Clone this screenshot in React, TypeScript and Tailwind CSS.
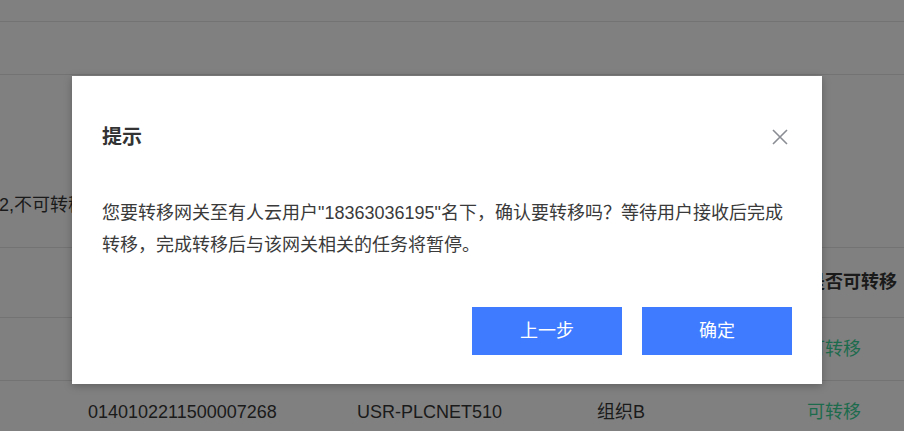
import React from "react";

const font = { fontFamily: '"Liberation Sans", "Noto Sans CJK SC", sans-serif' };

export default function App() {
  return (
    <div
      className="relative w-[904px] h-[431px] overflow-hidden bg-[#808080] text-[#1a1a1a]"
      style={font}
    >
      {/* background page (already dimmed by mask) */}
      <div className="flex flex-col">
        <div className="h-[22px] border-b border-[#737373]" />
        <div className="h-[53px] border-b border-[#737373]" />
        <div className="h-[172px] flex flex-col">
          <div className="mt-[116px] -ml-[1px] text-[18px] leading-[28px] whitespace-nowrap">2,不可转移</div>
        </div>
        <div className="grid grid-cols-[88px_269px_240px_210px_1fr] h-[71px] border-y border-[#737373] items-center text-[18px] font-bold">
          <div />
          <div />
          <div />
          <div />
          <div className="whitespace-nowrap">是否可转移</div>
        </div>
        <div className="grid grid-cols-[88px_269px_240px_210px_1fr] h-[63px] border-b border-[#737373] items-center text-[18px]">
          <div />
          <div />
          <div />
          <div />
          <div className="text-[#1d6b4d]">可转移</div>
        </div>
        <div className="grid grid-cols-[88px_269px_240px_210px_1fr] h-[63px] items-center text-[18px]">
          <div />
          <div>0140102211500007268</div>
          <div>USR-PLCNET510</div>
          <div>组织B</div>
          <div className="text-[#1d6b4d]">可转移</div>
        </div>
      </div>

      {/* modal */}
      <div className="absolute left-[72px] top-[76px] w-[750px] h-[308px] bg-white shadow-[0_2px_8px_rgba(0,0,0,0.25)] flex flex-col px-[30px]">
        <div className="flex items-center justify-between pt-[47px]">
          <div className="text-[20px] leading-[28px] font-bold text-[#333]">提示</div>
          <svg width="16" height="16" viewBox="0 0 16 16" className="mr-[4px]">
            <path d="M1 1L15 15M15 1L1 15" stroke="#8a8d94" strokeWidth="1.6" fill="none" />
          </svg>
        </div>
        <div className="mt-[46px] text-[18px] leading-[32px] text-[#3a3a3a]">
          您要转移网关至有人云用户"18363036195"名下，确认要转移吗？等待用户接收后完成转移，完成转移后与该网关相关的任务将暂停。
        </div>
        <div className="mt-[46px] flex justify-end gap-[20px]">
          <button className="w-[150px] h-[48px] bg-[#3e7bfe] text-white text-[18px]">上一步</button>
          <button className="w-[150px] h-[48px] bg-[#3e7bfe] text-white text-[18px]">确定</button>
        </div>
      </div>
    </div>
  );
}
